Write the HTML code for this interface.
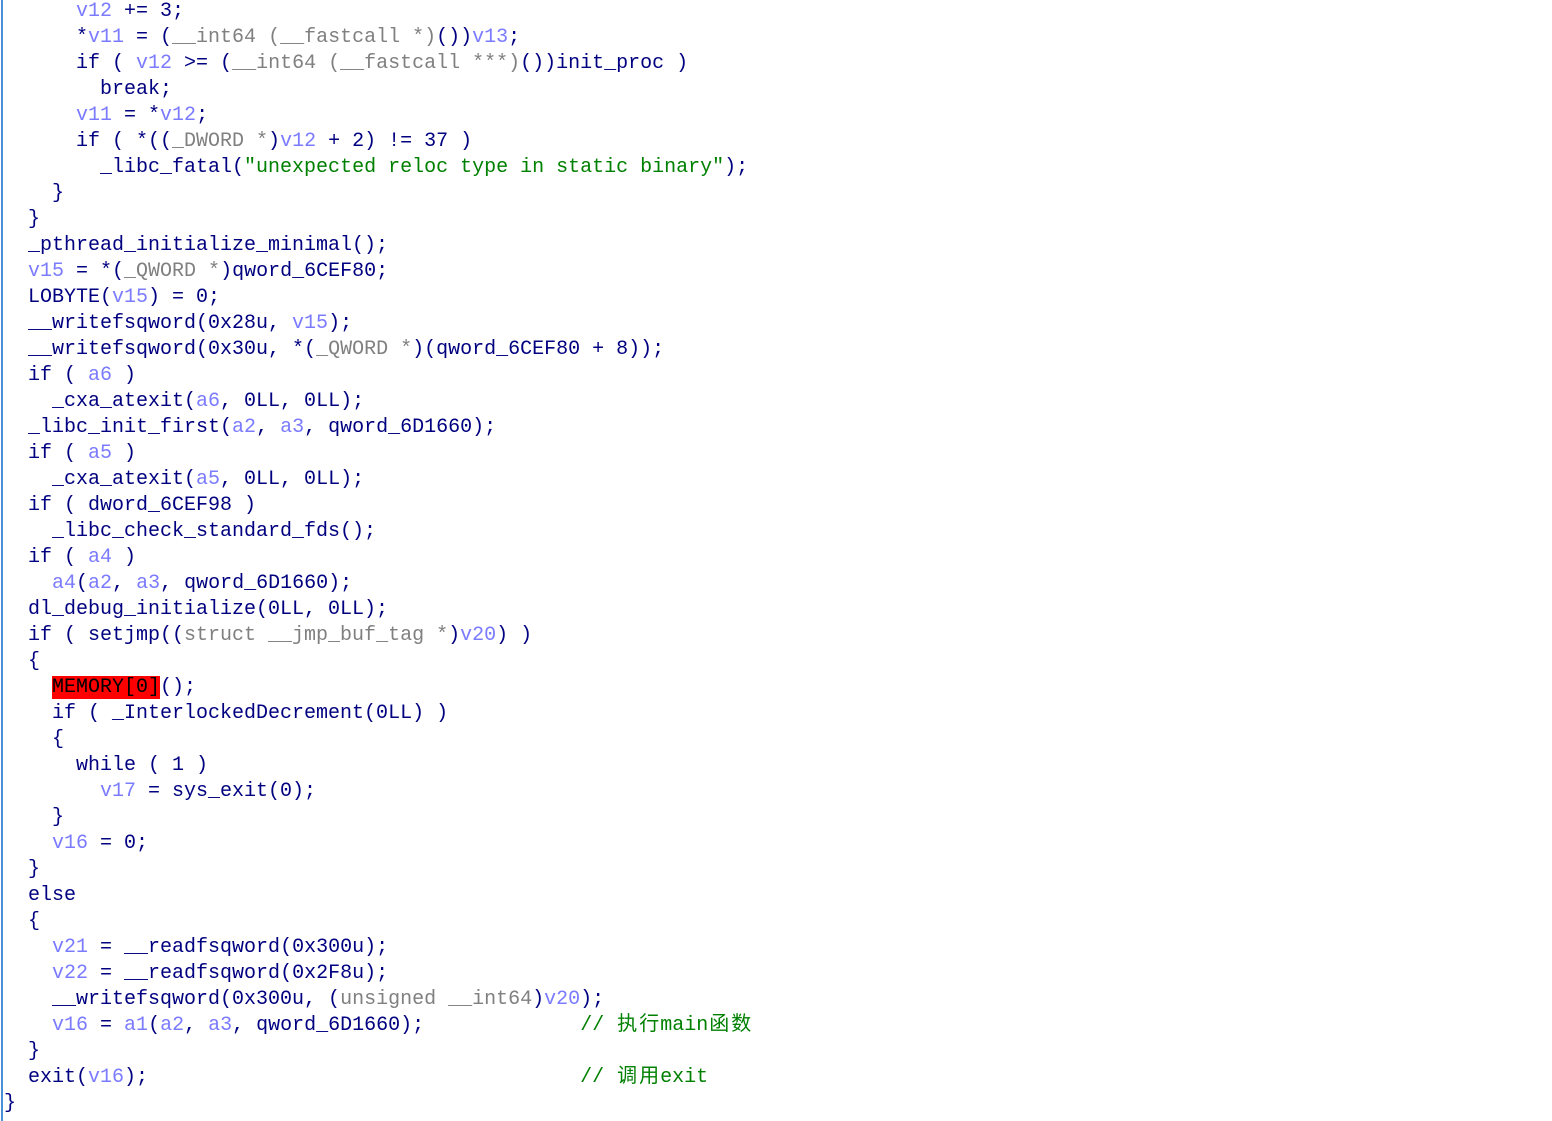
<!DOCTYPE html>
<html><head><meta charset="utf-8"><style>
html,body{margin:0;padding:0;background:#fff;width:1552px;height:1121px;overflow:hidden;position:relative}
.bl{position:absolute;left:1px;top:0;width:2px;height:1121px;background:#4a90d9}
pre{position:absolute;left:4px;top:-1px;margin:0;font-family:"Liberation Mono","Noto Sans CJK SC",monospace;font-size:20px;line-height:26px;color:#000080}
.v{color:#7b7bff}.t{color:#808080}.g{color:#008000}.k{color:#000080}
.m{background:#ff0000;color:#000}
.c{display:inline-block;width:22px;text-align:center}
</style></head><body><div class="bl"></div><pre>      <span class="v">v12</span> += 3;
      *<span class="v">v11</span> = (<span class="t">__int64 (__fastcall *)</span>())<span class="v">v13</span>;
      if ( <span class="v">v12</span> &gt;= (<span class="t">__int64 (__fastcall ***)</span>())init_proc )
        break;
      <span class="v">v11</span> = *<span class="v">v12</span>;
      if ( *((<span class="t">_DWORD *</span>)<span class="v">v12</span> + 2) != 37 )
        _libc_fatal(<span class="g">"unexpected reloc type in static binary"</span>);
    }
  }
  _pthread_initialize_minimal();
  <span class="v">v15</span> = *(<span class="t">_QWORD *</span>)qword_6CEF80;
  LOBYTE(<span class="v">v15</span>) = 0;
  __writefsqword(0x28u, <span class="v">v15</span>);
  __writefsqword(0x30u, *(<span class="t">_QWORD *</span>)(qword_6CEF80 + 8));
  if ( <span class="v">a6</span> )
    _cxa_atexit(<span class="v">a6</span>, 0LL, 0LL);
  _libc_init_first(<span class="v">a2</span>, <span class="v">a3</span>, qword_6D1660);
  if ( <span class="v">a5</span> )
    _cxa_atexit(<span class="v">a5</span>, 0LL, 0LL);
  if ( dword_6CEF98 )
    _libc_check_standard_fds();
  if ( <span class="v">a4</span> )
    <span class="v">a4</span>(<span class="v">a2</span>, <span class="v">a3</span>, qword_6D1660);
  dl_debug_initialize(0LL, 0LL);
  if ( setjmp((<span class="t">struct __jmp_buf_tag *</span>)<span class="v">v20</span>) )
  {
    <span class="m">MEMORY[0]</span>();
    if ( _InterlockedDecrement(0LL) )
    {
      while ( 1 )
        <span class="v">v17</span> = sys_exit(0);
    }
    <span class="v">v16</span> = 0;
  }
  else
  {
    <span class="v">v21</span> = __readfsqword(0x300u);
    <span class="v">v22</span> = __readfsqword(0x2F8u);
    __writefsqword(0x300u, (<span class="t">unsigned __int64</span>)<span class="v">v20</span>);
    <span class="v">v16</span> = <span class="v">a1</span>(<span class="v">a2</span>, <span class="v">a3</span>, qword_6D1660);             <span class="g">// <span class="c">执</span><span class="c">行</span>main<span class="c">函</span><span class="c">数</span></span>
  }
  exit(<span class="v">v16</span>);                                    <span class="g">// <span class="c">调</span><span class="c">用</span>exit</span>
}</pre></body></html>
